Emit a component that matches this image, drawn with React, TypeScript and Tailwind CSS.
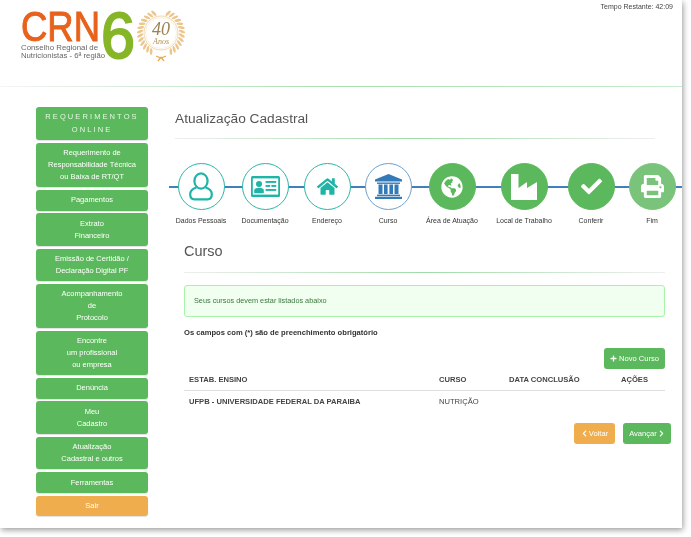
import React from "react";
import { FaHome, FaCheck, FaPrint, FaPlus, FaChevronLeft, FaChevronRight, FaGlobeAmericas } from "react-icons/fa";

const menu: { lines: string[]; orange?: boolean }[] = [
  { lines: ["Requerimento de", "Responsabilidade Técnica", "ou Baixa de RT/QT"] },
  { lines: ["Pagamentos"] },
  { lines: ["Extrato", "Financeiro"] },
  { lines: ["Emissão de Certidão /", "Declaração Digital PF"] },
  { lines: ["Acompanhamento", "de", "Protocolo"] },
  { lines: ["Encontre", "um profissional", "ou empresa"] },
  { lines: ["Denúncia"] },
  { lines: ["Meu", "Cadastro"] },
  { lines: ["Atualização", "Cadastral e outros"] },
  { lines: ["Ferramentas"] },
  { lines: ["Sair"], orange: true },
];

function UserIcon() {
  return (
    <svg width="24" height="29" viewBox="0 0 24 29" fill="none" stroke="#1fb5a6" strokeWidth="2.2">
      <ellipse cx="12" cy="9" rx="6.6" ry="7.6" />
      <path d="M7.5 15.5 C3.5 16.5 1.2 19 1.2 22.5 C1.2 25.5 3 27.3 5.5 27.3 H18.5 C21 27.3 22.8 25.5 22.8 22.5 C22.8 19 20.5 16.5 16.5 15.5" />
    </svg>
  );
}

function IdIcon() {
  return (
    <svg width="29" height="21" viewBox="0 0 29 21">
      <rect x="0" y="0" width="29" height="21" rx="1.5" fill="#1fb5a6" />
      <rect x="1.8" y="2.4" width="25.4" height="16.2" fill="#fff" />
      <circle cx="8" cy="8" r="3" fill="#1fb5a6" />
      <path d="M3.2 17.2 V14.5 C3.2 12.6 5 11.8 8 11.8 C11 11.8 12.8 12.6 12.8 14.5 V17.2 Z" fill="#1fb5a6" />
      <rect x="14.6" y="5" width="10.6" height="1.9" fill="#1fb5a6" />
      <rect x="14.6" y="9" width="4.6" height="1.9" fill="#1fb5a6" />
      <rect x="20.4" y="9" width="4.8" height="1.9" fill="#1fb5a6" />
      <rect x="14.6" y="13" width="10.6" height="1.9" fill="#1fb5a6" />
    </svg>
  );
}

function BankIcon() {
  return (
    <svg width="27" height="25" viewBox="0 0 27 25" fill="#337ab7">
      <path d="M13.5 0 L27 5.5 V7.5 H0 V5.5 Z" />
      <rect x="2" y="8.5" width="23" height="1.4" />
      <rect x="3.5" y="10.5" width="4" height="9.5" />
      <rect x="9" y="10.5" width="3.6" height="9.5" />
      <rect x="14.4" y="10.5" width="3.6" height="9.5" />
      <rect x="19.5" y="10.5" width="4" height="9.5" />
      <rect x="2" y="20.6" width="23" height="1.6" />
      <rect x="0" y="22.8" width="27" height="2.2" />
    </svg>
  );
}

function FactoryIcon() {
  return (
    <svg width="26" height="26" viewBox="0 0 26 26" fill="#fff">
      <path d="M0 0 H7.5 V14 L16 8 V14 L26 8 V26 H0 Z" />
    </svg>
  );
}

function Medal() {
  const leaves = [];
  for (let i = 0; i < 13; i++) {
    const a = 20 + i * 11;
    for (const s of [1, -1]) {
      const rad = ((90 - s * (180 - a)) * Math.PI) / 180;
      const x = 25 + 21 * Math.cos(rad);
      const y = 25 + 21 * Math.sin(rad);
      const rot = (rad * 180) / Math.PI + 90 + s * 25;
      leaves.push(<ellipse key={`${i}${s}`} cx={x} cy={y} rx="1.3" ry="3.4" fill="#ecc68c" transform={`rotate(${rot} ${x} ${y})`} />);
    }
  }
  return (
    <svg width="50" height="54" viewBox="0 0 50 54">
      {leaves}
      <circle cx="25" cy="25" r="17" fill="#fff" stroke="#e9c58d" strokeWidth="0.7" />
      <circle cx="25" cy="25" r="15.5" fill="none" stroke="#f3dfbd" strokeWidth="0.5" />
      <text x="25" y="27" textAnchor="middle" fontFamily="'Liberation Serif', serif" fontStyle="italic" fontSize="18" fill="#9a8355">40</text>
      <text x="25" y="36" textAnchor="middle" fontFamily="'Liberation Serif', serif" fontStyle="italic" fontSize="8" fill="#b08f4d">Anos</text>
      <path d="M20 48 L25 50 L30 48 M25 49 L22 53 M25 49 L28 53" stroke="#eba94c" strokeWidth="1.3" fill="none" />
    </svg>
  );
}

function Logo() {
  return (
    <div className="flex items-start pl-[20px] pt-[9px]">
      <svg width="117" height="54" viewBox="0 0 117 54">
        <text x="1" y="32" fontFamily="'Liberation Sans', sans-serif" fontSize="43" fill="#e8621c" stroke="#e8621c" strokeWidth="1" textLength="79" lengthAdjust="spacingAndGlyphs">CRN</text>
        <text x="81" y="49" fontFamily="'Liberation Sans', sans-serif" fontSize="65" fill="#86b627" stroke="#86b627" strokeWidth="2" textLength="34" lengthAdjust="spacingAndGlyphs">6</text>
        <text x="1" y="41" fontFamily="'Liberation Sans', sans-serif" fontSize="7.6" fill="#666" textLength="77" lengthAdjust="spacingAndGlyphs">Conselho Regional de</text>
        <text x="1" y="49" fontFamily="'Liberation Sans', sans-serif" fontSize="7.6" fill="#666" textLength="84" lengthAdjust="spacingAndGlyphs">Nutricionistas - 6ª região</text>
      </svg>
      <div className="ml-[-1px] mt-[-1px]"><Medal /></div>
    </div>
  );
}

const teal = "border-[#2ab5a8] text-[#1fb5a6] bg-white";
const green = "border-[#5cb85c] bg-[#5cb85c] text-white";

const steps: { label: string; w: string; cls: string; icon: React.ReactNode }[] = [
  { label: "Dados Pessoais", w: "w-[64px]", cls: teal, icon: <UserIcon /> },
  { label: "Documentação", w: "w-[64px]", cls: teal, icon: <IdIcon /> },
  { label: "Endereço", w: "w-[60px]", cls: teal, icon: <FaHome className="text-[21px]" /> },
  { label: "Curso", w: "w-[62px]", cls: "border-[#6f9fcc] bg-white", icon: <BankIcon /> },
  { label: "Área de Atuação", w: "w-[66px]", cls: green, icon: <FaGlobeAmericas className="text-[22px]" /> },
  { label: "Local de Trabalho", w: "w-[78px]", cls: green, icon: <FactoryIcon /> },
  { label: "Conferir", w: "w-[56px]", cls: green, icon: <FaCheck className="text-[21px]" /> },
  { label: "Fim", w: "w-[66px]", cls: "border-[#7ac37a] bg-[#7ac37a] text-white", icon: <FaPrint className="text-[23px]" /> },
];

export default function App() {
  return (
    <div className="h-[537px] w-[691px] overflow-hidden bg-white font-['Liberation_Sans',Arial,sans-serif]">
      <div className="h-[528px] w-[682px] bg-white shadow-[1px_2px_6px_rgba(0,0,0,0.4)]">
        <div className="blur-[0.3px]">
          <header className="h-[87px]">
            <div className="flex h-[86px] items-start justify-between">
              <Logo />
              <span className="pr-[9px] pt-[2px] text-[7px] leading-[9px] text-[#444]">Tempo Restante: 42:09</span>
            </div>
            <div className="h-px bg-gradient-to-r from-[#f4f4f4] via-[#a5dfae] to-[#c8ecce]" />
          </header>

          <div className="flex">
            <nav className="ml-[36px] mt-[20px] flex w-[112px] shrink-0 flex-col gap-[2.7px]">
              <div className="rounded-[3px] bg-[#5cb85c] py-[4px] text-center text-[7.5px] leading-[12.5px] tracking-[2.1px] text-[#e6f5e6] shadow-[0_1px_1px_rgba(0,0,0,0.12)]">
                REQUERIMENTOS<br />ONLINE
              </div>
              {menu.map((m) => (
                <div
                  key={m.lines[0]}
                  className={`rounded-[3px] py-[4.5px] text-center text-[7.5px] leading-[11.8px] text-white shadow-[0_1px_1px_rgba(0,0,0,0.12)] ${m.orange ? "bg-[#f0ad4e]" : "bg-[#5cb85c]"}`}
                >
                  {m.lines.map((l) => (
                    <div key={l}>{l}</div>
                  ))}
                </div>
              ))}
            </nav>

            <main className="ml-[21px] min-w-0 flex-1">
              <div className="ml-[6px] w-[480px] pt-[22px]">
                <h1 className="text-[13.7px] leading-[20px] text-[#555]">Atualização Cadastral</h1>
                <div className="mt-[9px] h-px bg-gradient-to-r from-[#eeeeee] via-[#9fdca8] to-[#eeeeee]" />
              </div>

              <div className="relative mt-[24px] flex">
                <div className="absolute left-0 right-0 top-[23px] h-[2px] bg-[#3f80bd]" />
                {steps.map((s) => (
                  <div key={s.label} className={`relative flex shrink-0 flex-col items-center ${s.w}`}>
                    <div className={`flex h-[47px] w-[47px] items-center justify-center rounded-full border ${s.cls}`}>
                      {s.icon}
                    </div>
                    <span className="mt-[6px] whitespace-nowrap text-[7px] leading-[9px] text-[#333]">{s.label}</span>
                  </div>
                ))}
              </div>

              <section className="ml-[15px] w-[481px]">
                <h2 className="mt-[16px] text-[14.5px] leading-[20px] text-[#555]">Curso</h2>
                <div className="mt-[11px] h-px bg-gradient-to-r from-[#eeeeee] via-[#9fdca8] to-[#eeeeee]" />
                <div className="mt-[12px] flex h-[32px] items-center rounded-[3px] border border-[#a9f2a9] bg-[#f0fff0] pl-[9px] text-[7.3px] text-[#3c763d]">
                  Seus cursos devem estar listados abaixo
                </div>
                <p className="mt-[11px] text-[7.6px] font-bold leading-[10px] text-[#333]">Os campos com (*) são de preenchimento obrigatório</p>
                <div className="mt-[10px] flex justify-end">
                  <button className="flex h-[21px] w-[61px] items-center justify-center gap-[2px] rounded-[3px] bg-[#5cb85c] text-[7.6px] text-white">
                    <FaPlus className="text-[7px]" /> Novo Curso
                  </button>
                </div>
                <table className="w-full table-fixed text-[7.6px] text-[#444]">
                  <thead>
                    <tr className="h-[21px] border-b border-[#ddd] text-left font-bold">
                      <th className="w-[250px] pl-[5px] pt-[1px]">ESTAB. ENSINO</th>
                      <th className="w-[70px] pl-[5px] pt-[1px]">CURSO</th>
                      <th className="w-[111px] pl-[5px] pt-[1px]">DATA CONCLUSÃO</th>
                      <th className="pl-[6px] pt-[1px]">AÇÕES</th>
                    </tr>
                  </thead>
                  <tbody>
                    <tr className="h-[23px]">
                      <td className="pl-[5px] font-bold">UFPB - UNIVERSIDADE FEDERAL DA PARAIBA</td>
                      <td className="pl-[5px]">NUTRIÇÃO</td>
                      <td />
                      <td />
                    </tr>
                  </tbody>
                </table>
              </section>

              <div className="ml-[405px] mt-[10px] flex gap-[8px]">
                <button className="flex h-[21px] w-[41px] items-center justify-center gap-[1px] rounded-[3px] bg-[#f0ad4e] text-[7.6px] text-white">
                  <FaChevronLeft className="text-[7px]" /> Voltar
                </button>
                <button className="flex h-[21px] w-[48px] items-center justify-center gap-[1px] rounded-[3px] bg-[#5cb85c] text-[7.6px] text-white">
                  Avançar <FaChevronRight className="text-[7px]" />
                </button>
              </div>
            </main>
          </div>
        </div>
      </div>
    </div>
  );
}
